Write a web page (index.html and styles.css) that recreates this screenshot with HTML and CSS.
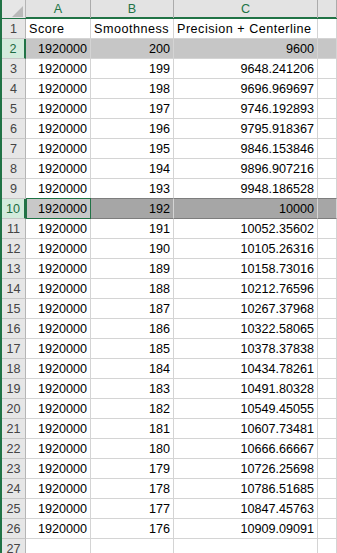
FILE: index.html
```html
<!DOCTYPE html>
<html lang="en">

<head>
    <meta charset="UTF-8">
    <meta name="viewport" content="width=device-width, initial-scale=1.0">
    <title>Sheet1</title>
    <link rel="stylesheet" href="styles.css">
</head>

<body>
    <div class="sheet">
        <div class="row head">
            <div class="rh corner"><svg width="11" height="11" viewBox="0 0 11 11"><polygon points="11,0 11,11 0,11" fill="#b9b9b9"/></svg></div>
            <div class="ch">A</div>
            <div class="ch">B</div>
            <div class="ch">C</div>
            <div class="ch"></div>
        </div>
        <div class="row">
            <div class="rh">1</div>
            <div class="c txt">Score</div>
            <div class="c txt">Smoothness</div>
            <div class="c txt">Precision + Centerline</div>
            <div class="c"></div>
        </div>
        <div class="row fill sel">
            <div class="rh">2</div>
            <div class="c">1920000</div>
            <div class="c">200</div>
            <div class="c">9600</div>
            <div class="c"></div>
        </div>
        <div class="row">
            <div class="rh">3</div>
            <div class="c">1920000</div>
            <div class="c">199</div>
            <div class="c">9648.241206</div>
            <div class="c"></div>
        </div>
        <div class="row">
            <div class="rh">4</div>
            <div class="c">1920000</div>
            <div class="c">198</div>
            <div class="c">9696.969697</div>
            <div class="c"></div>
        </div>
        <div class="row">
            <div class="rh">5</div>
            <div class="c">1920000</div>
            <div class="c">197</div>
            <div class="c">9746.192893</div>
            <div class="c"></div>
        </div>
        <div class="row">
            <div class="rh">6</div>
            <div class="c">1920000</div>
            <div class="c">196</div>
            <div class="c">9795.918367</div>
            <div class="c"></div>
        </div>
        <div class="row">
            <div class="rh">7</div>
            <div class="c">1920000</div>
            <div class="c">195</div>
            <div class="c">9846.153846</div>
            <div class="c"></div>
        </div>
        <div class="row">
            <div class="rh">8</div>
            <div class="c">1920000</div>
            <div class="c">194</div>
            <div class="c">9896.907216</div>
            <div class="c"></div>
        </div>
        <div class="row before-active">
            <div class="rh">9</div>
            <div class="c">1920000</div>
            <div class="c">193</div>
            <div class="c">9948.186528</div>
            <div class="c"></div>
        </div>
        <div class="row active sel">
            <div class="rh">10</div>
            <div class="c cur">1920000</div>
            <div class="c">192</div>
            <div class="c">10000</div>
            <div class="c"></div>
        </div>
        <div class="row">
            <div class="rh">11</div>
            <div class="c">1920000</div>
            <div class="c">191</div>
            <div class="c">10052.35602</div>
            <div class="c"></div>
        </div>
        <div class="row">
            <div class="rh">12</div>
            <div class="c">1920000</div>
            <div class="c">190</div>
            <div class="c">10105.26316</div>
            <div class="c"></div>
        </div>
        <div class="row">
            <div class="rh">13</div>
            <div class="c">1920000</div>
            <div class="c">189</div>
            <div class="c">10158.73016</div>
            <div class="c"></div>
        </div>
        <div class="row">
            <div class="rh">14</div>
            <div class="c">1920000</div>
            <div class="c">188</div>
            <div class="c">10212.76596</div>
            <div class="c"></div>
        </div>
        <div class="row">
            <div class="rh">15</div>
            <div class="c">1920000</div>
            <div class="c">187</div>
            <div class="c">10267.37968</div>
            <div class="c"></div>
        </div>
        <div class="row">
            <div class="rh">16</div>
            <div class="c">1920000</div>
            <div class="c">186</div>
            <div class="c">10322.58065</div>
            <div class="c"></div>
        </div>
        <div class="row">
            <div class="rh">17</div>
            <div class="c">1920000</div>
            <div class="c">185</div>
            <div class="c">10378.37838</div>
            <div class="c"></div>
        </div>
        <div class="row">
            <div class="rh">18</div>
            <div class="c">1920000</div>
            <div class="c">184</div>
            <div class="c">10434.78261</div>
            <div class="c"></div>
        </div>
        <div class="row">
            <div class="rh">19</div>
            <div class="c">1920000</div>
            <div class="c">183</div>
            <div class="c">10491.80328</div>
            <div class="c"></div>
        </div>
        <div class="row">
            <div class="rh">20</div>
            <div class="c">1920000</div>
            <div class="c">182</div>
            <div class="c">10549.45055</div>
            <div class="c"></div>
        </div>
        <div class="row">
            <div class="rh">21</div>
            <div class="c">1920000</div>
            <div class="c">181</div>
            <div class="c">10607.73481</div>
            <div class="c"></div>
        </div>
        <div class="row">
            <div class="rh">22</div>
            <div class="c">1920000</div>
            <div class="c">180</div>
            <div class="c">10666.66667</div>
            <div class="c"></div>
        </div>
        <div class="row">
            <div class="rh">23</div>
            <div class="c">1920000</div>
            <div class="c">179</div>
            <div class="c">10726.25698</div>
            <div class="c"></div>
        </div>
        <div class="row">
            <div class="rh">24</div>
            <div class="c">1920000</div>
            <div class="c">178</div>
            <div class="c">10786.51685</div>
            <div class="c"></div>
        </div>
        <div class="row">
            <div class="rh">25</div>
            <div class="c">1920000</div>
            <div class="c">177</div>
            <div class="c">10847.45763</div>
            <div class="c"></div>
        </div>
        <div class="row">
            <div class="rh">26</div>
            <div class="c">1920000</div>
            <div class="c">176</div>
            <div class="c">10909.09091</div>
            <div class="c"></div>
        </div>
        <div class="row">
            <div class="rh">27</div>
            <div class="c"></div>
            <div class="c"></div>
            <div class="c"></div>
            <div class="c"></div>
        </div>
    </div>
</body>

</html>
```

FILE: styles.css
```css
* {
    box-sizing: border-box;
}

body {
    margin: 0px;
    padding: 0px;
    background-color: #fff;
    overflow: hidden;
}

.sheet {
    width: 337px;
    height: 553px;
    overflow: hidden;
    border-left: 2px solid #217346;
    font-family: "Liberation Sans", Arial, sans-serif;
    font-size: 12.6px;
    color: #000;
}

.row {
    display: grid;
    grid-template-columns: 24px 65px 83px 144px 1fr;
    height: 20px;
}

.head {
    height: 19px;
    background-color: #e3e3e3;
    border-bottom: 2px solid #217346;
}

.ch {
    border-right: 1px solid #ababab;
    color: #217346;
    text-align: center;
    line-height: 17px;
    padding-top: 1px;
}

.corner {
    display: flex;
    align-items: flex-end;
    justify-content: flex-end;
    padding: 0px 2px 1px 0px;
    border-right: 1px solid #ababab;
    border-bottom: none !important;
}

.rh {
    background-color: #e6e6e6;
    color: #444;
    text-align: center;
    border-right: 1px solid #b5b5b5;
    border-bottom: 1px solid #c6c6c6;
    padding-top: 2px;
    line-height: 17px;
}

.c {
    border-right: 1px solid #d4d4d4;
    border-bottom: 1px solid #d4d4d4;
    text-align: right;
    padding: 2px 3px 0px 2px;
    line-height: 17px;
    white-space: nowrap;
    overflow: hidden;
}

.txt {
    text-align: left;
    padding-left: 3px;
    letter-spacing: 0.5px;
}

.fill .c {
    background-color: #c6c6c6;
}

.sel .rh {
    background-color: #d3ebdc;
    color: #1e6b43;
    border-right: 2px solid #217346;
}

.before-active .c {
    border-bottom-color: #7d7d7d;
}

.active .c {
    background-color: #a6a6a6;
    border-bottom-color: #7d7d7d;
}

.active .cur {
    background-color: #c8c8c8;
    border: 1px solid #217346;
    margin-top: -1px;
    height: 21px;
    padding-top: 2px;
}
```
